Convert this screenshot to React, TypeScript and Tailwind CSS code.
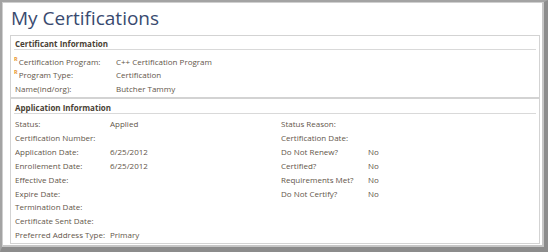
import * as React from 'react';

interface Field {
    label: string;
    value?: string;
    required?: boolean;
}

const certificant: Field[] = [
    { label: 'Certification Program:', value: 'C++ Certification Program', required: true },
    { label: 'Program Type:', value: 'Certification', required: true },
    { label: 'Name(ind/org):', value: 'Butcher Tammy' },
];

const appLeft: Field[] = [
    { label: 'Status:', value: 'Applied' },
    { label: 'Certification Number:' },
    { label: 'Application Date:', value: '6/25/2012' },
    { label: 'Enrollement Date:', value: '6/25/2012' },
    { label: 'Effective Date:' },
    { label: 'Expire Date:' },
    { label: 'Termination Date:' },
    { label: 'Certificate Sent Date:' },
    { label: 'Preferred Address Type:', value: 'Primary' },
];

const appRight: Field[] = [
    { label: 'Status Reason:' },
    { label: 'Certification Date:' },
    { label: 'Do Not Renew?', value: 'No' },
    { label: 'Certified?', value: 'No' },
    { label: 'Requirements Met?', value: 'No' },
    { label: 'Do Not Certify?', value: 'No' },
];

const Row: React.FC<{ field: Field; labelWidth: string; rowHeight: string }> = ({ field, labelWidth, rowHeight }) => (
    <div className={`flex items-center whitespace-nowrap ${rowHeight}`}>
        <div className={`flex items-center shrink-0 ${labelWidth}`}>
            {field.required && (
                <span className="text-[5.5px] leading-none font-bold text-[#e8952a] self-start mt-[1px] mr-[1px] -ml-[1px]">R</span>
            )}
            <span>{field.label}</span>
        </div>
        {field.value && <span className="ml-[4px]">{field.value}</span>}
    </div>
);

const SectionHeader: React.FC<{ title: string; pt: string }> = ({ title, pt }) => (
    <div className={`mx-[3px] ${pt} pl-[1px] leading-[10px] border-b border-[#d9d9d9] font-bold text-[#4a3f35]`}>
        {title}
    </div>
);

const App: React.FC = () => {
    return (
        <div className="w-[548px] h-[252px] bg-white" style={{ fontFamily: '"Open Sans", "Liberation Sans", sans-serif' }}>
            <div className="w-full h-full border-l-2 border-t-2 border-r-[4px] border-b-[5px] border-l-[#a3a3a3] border-t-[#a3a3a3] border-r-[#8c8c8c] border-b-[#8c8c8c]">
                <div className="w-full h-full bg-white border-l border-t border-r-2 border-b-2 border-l-[#cfcfcf] border-t-[#cfcfcf] border-r-[#c6c6c6] border-b-[#c6c6c6] pl-[7px] pr-[2px] pt-[3px]">
                    <h1 className="text-[19px] leading-[24px] text-[#394a6f] pl-[1px]">My Certifications</h1>

                    <div className="mt-[5px] text-[8px] text-[#63564a]">
                        <div className="border border-[#d3d3d3] h-[63px]">
                            <SectionHeader title="Certificant Information" pt="pt-[3px]" />
                            <div className="pt-[5px] pl-[4px]">
                                {certificant.map((f) => (
                                    <Row key={f.label} field={f} labelWidth="w-[97px]" rowHeight="h-[13.67px]" />
                                ))}
                            </div>
                        </div>

                        <div className="border border-[#d3d3d3] h-[146px]">
                            <SectionHeader title="Application Information" pt="pt-[4px]" />
                            <div className="pt-[3px] pl-[4px] flex">
                                <div className="w-[266px]">
                                    {appLeft.map((f) => (
                                        <Row key={f.label} field={f} labelWidth="w-[91px]" rowHeight="h-[13.93px]" />
                                    ))}
                                </div>
                                <div>
                                    {appRight.map((f) => (
                                        <Row key={f.label} field={f} labelWidth="w-[83px]" rowHeight="h-[13.93px]" />
                                    ))}
                                </div>
                            </div>
                        </div>
                    </div>
                </div>
            </div>
        </div>
    );
};

export default App;
